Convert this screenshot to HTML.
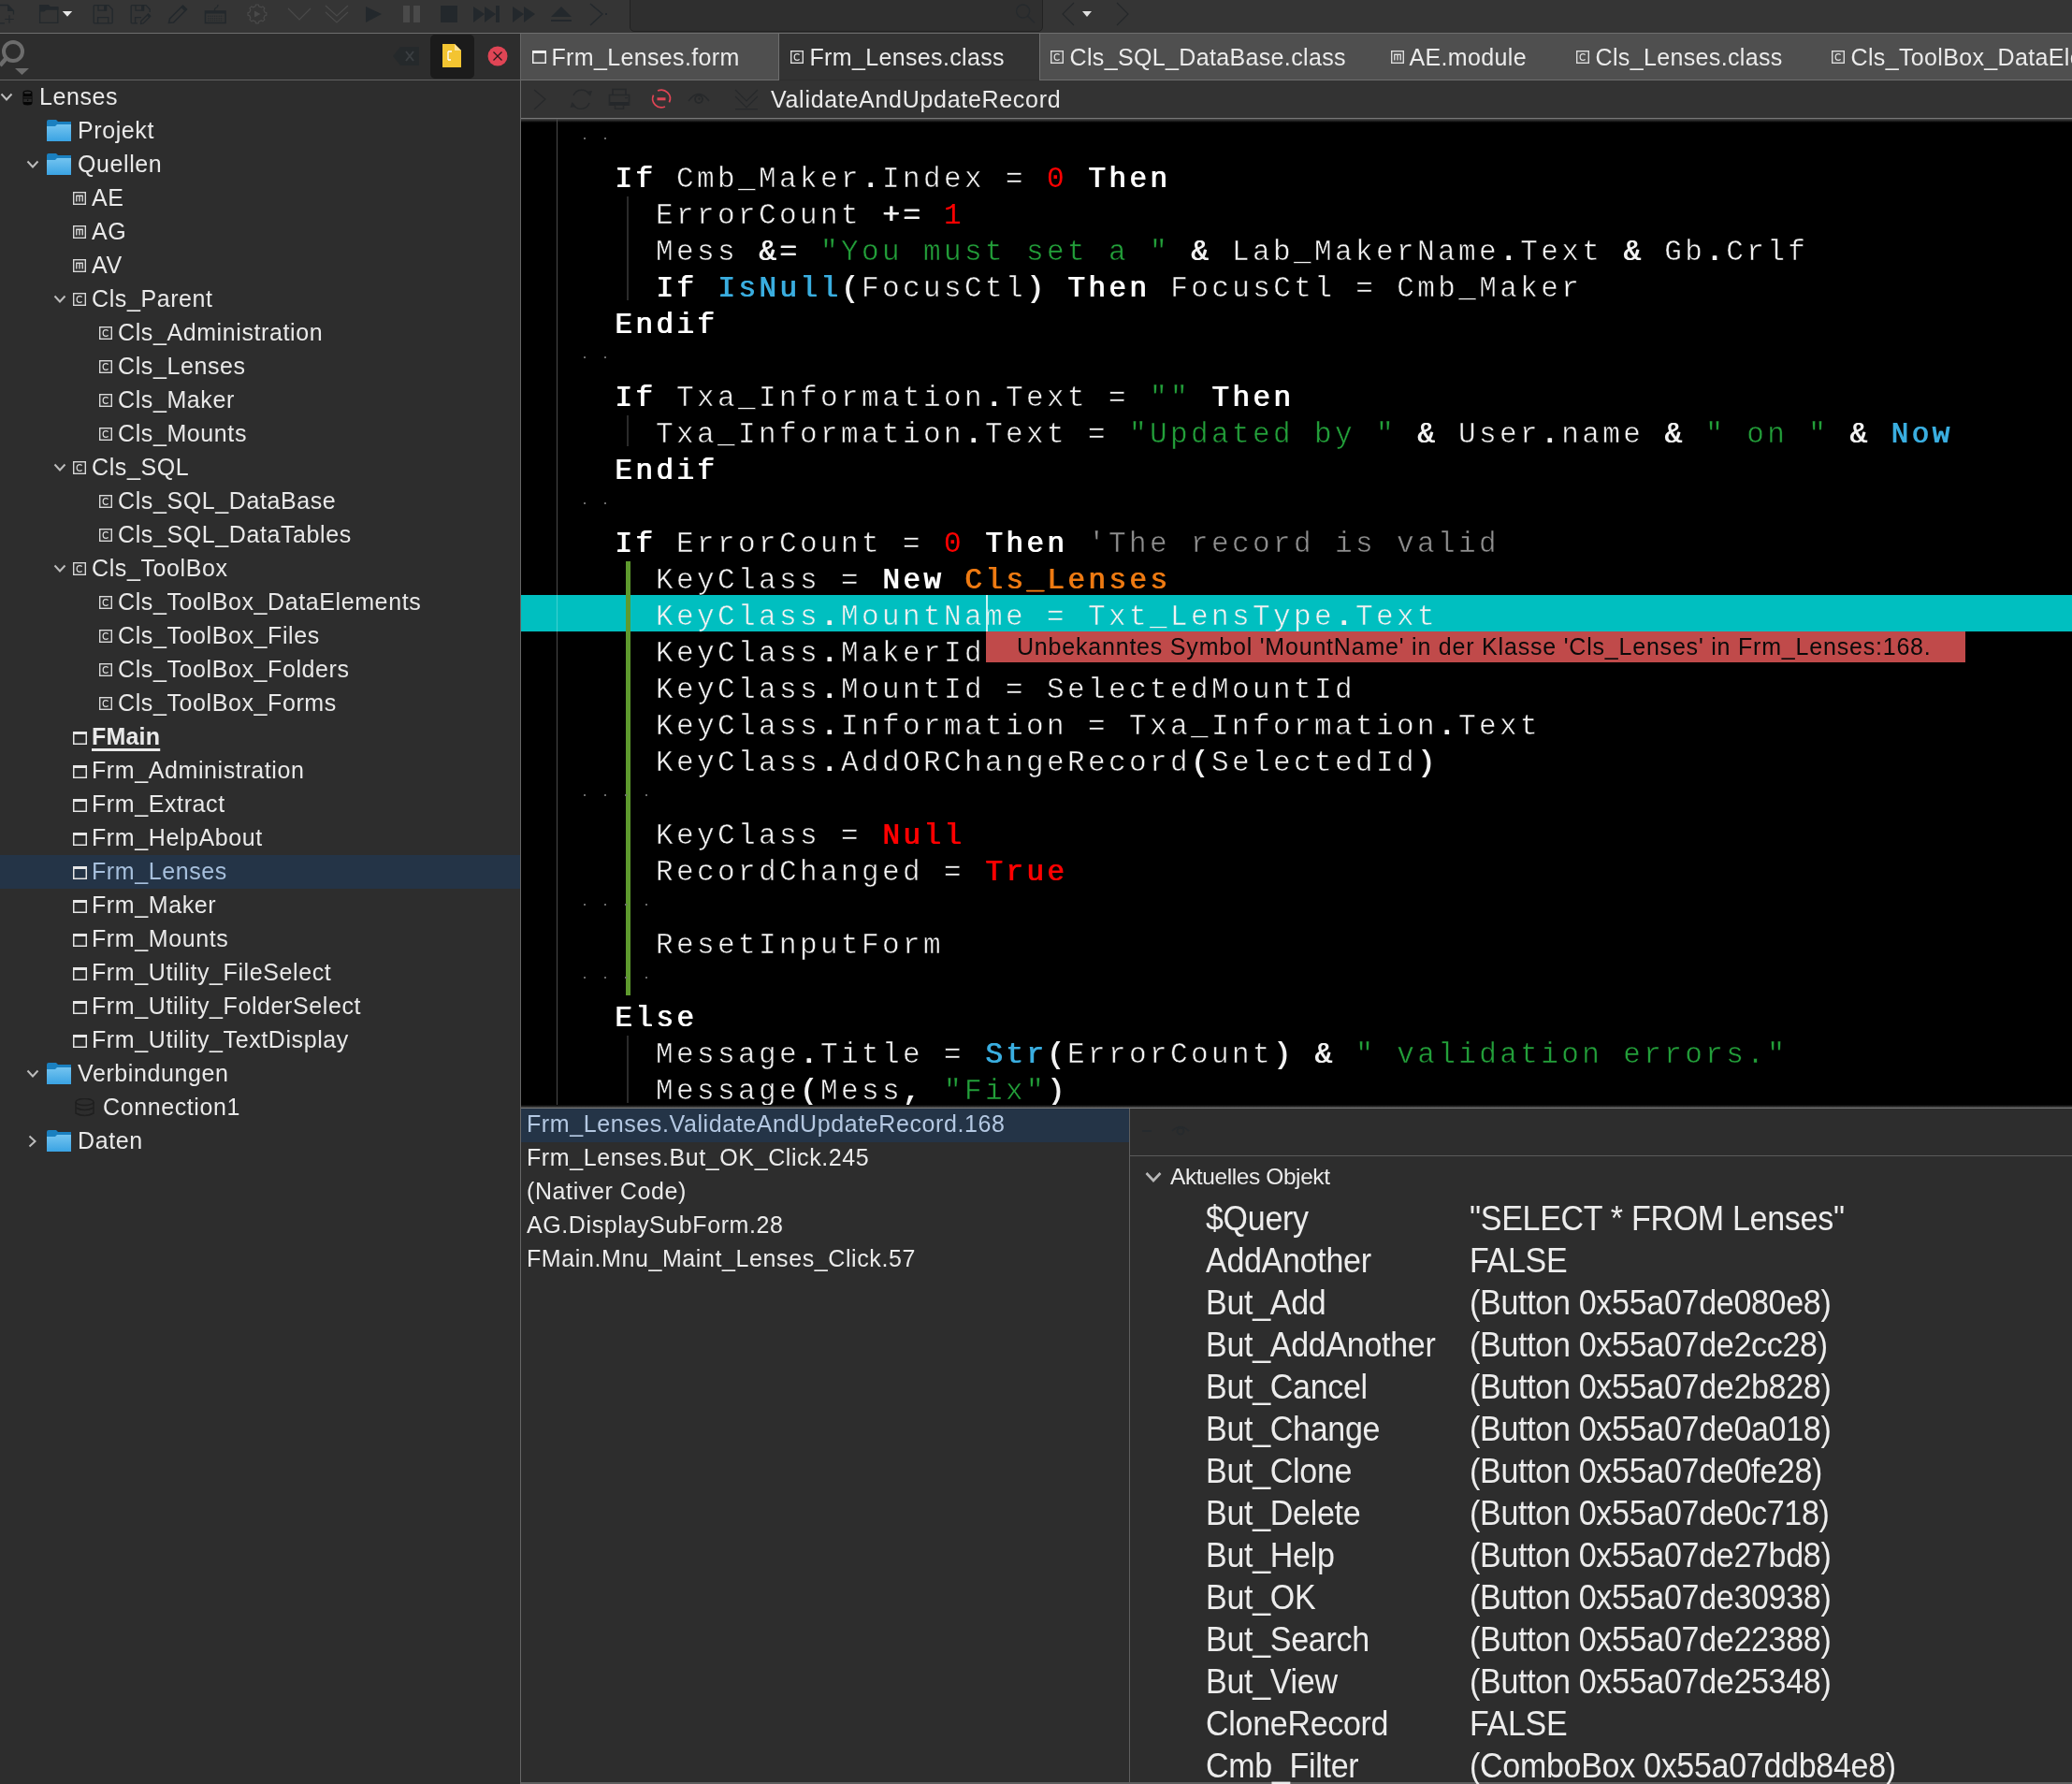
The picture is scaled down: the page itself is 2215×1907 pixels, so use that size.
<!DOCTYPE html>
<html><head><meta charset="utf-8"><style>
*{margin:0;padding:0;box-sizing:border-box}
html,body{width:2215px;height:1907px;overflow:hidden;background:#2d2d2d;font-family:"Liberation Sans",sans-serif}
#root{position:absolute;left:0;top:0;width:2215px;height:1907px;will-change:transform}
.ab{position:absolute;display:block}
.cl{position:absolute;height:39px;line-height:39px;font-family:"Liberation Mono",monospace;font-size:31px;letter-spacing:3.397px;white-space:pre;color:#f2f2f2;-webkit-text-stroke:0.5px #000}
.cl.hl{-webkit-text-stroke:0.5px #00bfc0}
.cl .tk,.cl .to,.cl .tx,.cl .tf,.cl .tc,.cl .tn{-webkit-text-stroke:0}
.tk{color:#fff;text-shadow:1px 0 0 currentColor}
.to{text-shadow:1px 0 0 currentColor}
.tn{color:#ff0000}
.tx{color:#ff0000;text-shadow:1px 0 0 currentColor}
.ts{color:#23a03a}
.tf{color:#3aaee0;text-shadow:1px 0 0 currentColor}
.tc{color:#ee7a12;text-shadow:1px 0 0 currentColor}
.tm{color:#8e8e8e}
.dot{position:absolute;width:2px;height:2px;background:#6a6a6a}
.tr{position:absolute;height:36px;line-height:36px;font-size:25px;letter-spacing:0.6px;color:#e9e9e9;white-space:pre}
.tr.sel{color:#a6bfdc}
.tr.main{font-weight:bold;text-decoration:underline;text-decoration-thickness:3px;text-underline-offset:4px;letter-spacing:0.2px}
.ui{position:absolute;font-size:25px;letter-spacing:0.6px;color:#ebebeb;white-space:pre}
.var{position:absolute;height:45px;line-height:45px;font-size:36px;letter-spacing:-0.3px;color:#ececec;white-space:pre;transform:scaleX(0.944);transform-origin:0 0}
</style></head><body><div id="root">
<div class="ab" style="left:0;top:0;width:2215px;height:35px;background:#353535"></div>
<div class="ab" style="left:0;top:35px;width:2215px;height:1px;background:#6e6e6e"></div>
<svg class="ab" style="left:0;top:0" width="1260" height="35"><path d="M-3 5.5 H8.5 L14.5 11.5 V15.5 M5 24.8 H-3" fill="none" stroke="#23282c" stroke-width="1.3"/><path d="M8 5 L15 12 H8 Z" fill="#23282c"/><path d="M5.3 20.5 H14.8 M10 16.3 V24.8" stroke="#23282c" stroke-width="1.2"/><path d="M42.6 24.4 V5.6 H51.4 L53.4 7.8 H61.8 V24.4 Z" fill="none" stroke="#23282c" stroke-width="1.3" stroke-linejoin="round"/><path d="M42 5 H51.6 L53.6 7.2 H62.4 V10.7 H49.5 L47 12.6 H42 Z" fill="#23282c"/><path d="M66.8 12 H77.2 L72 17.8 Z" fill="#e8e8e8"/><path d="M100.2 6.5 Q100.2 5.6 101 5.6 H116 L120.2 10 V24 Q120.2 24.8 119.4 24.8 H101 Q100.2 24.8 100.2 24 Z" fill="none" stroke="#23282c" stroke-width="1.3"/><path d="M105 5.6 V11.2 H113.6 V5.6" fill="none" stroke="#23282c" stroke-width="1.3"/><rect x="111" y="5.6" width="2.6" height="5.6" fill="#23282c"/><path d="M104.6 24.8 V18.6 H115.8 V24.8" fill="none" stroke="#23282c" stroke-width="1.3"/><path d="M147 24.8 H141 Q140.2 24.8 140.2 24 V6.5 Q140.2 5.6 141 5.6 H156 L160.2 10 V13" fill="none" stroke="#23282c" stroke-width="1.3"/><path d="M145 5.6 V11.2 H153.6 V5.6" fill="none" stroke="#23282c" stroke-width="1.3"/><rect x="151" y="5.6" width="2.6" height="5.6" fill="#23282c"/><path d="M144.6 24.8 V18.6 H151" fill="none" stroke="#23282c" stroke-width="1.3"/><path d="M150.5 25.5 L150.8 22.5 L158.5 15 L160.8 17.3 L153.2 25 Z" fill="none" stroke="#23282c" stroke-width="1.3"/><path d="M157 16.5 L158.5 15 L160.8 17.3 L159.3 18.8 Z" fill="#23282c"/><path d="M180.5 24.5 L181.5 20 L195.5 6 L199.5 10 L185.5 24 Z" fill="none" stroke="#23282c" stroke-width="1.5"/><path d="M193.5 8 L195.5 6 L199.5 10 L197.5 12 Z" fill="#23282c"/><rect x="219.5" y="12" width="21.5" height="12.5" fill="none" stroke="#23282c" stroke-width="1.6"/><rect x="219.5" y="12" width="21.5" height="2.5" fill="#23282c"/><path d="M222 17.2 H238.5 M222 19.7 H238.5 M222 22 H238.5" stroke="#23282c" stroke-width="1.1" stroke-dasharray="1.3 1" fill="none"/><path d="M229.5 12 V10 Q229.5 8.5 231.5 8 Q233 7.5 233 5" stroke="#23282c" stroke-width="1.2" fill="none"/><path d="M282.97 12.96 L284.81 13.57 L284.81 16.23 L282.97 16.84 L281.98 19.24 L282.85 20.97 L280.97 22.85 L279.24 21.98 L276.84 22.97 L276.23 24.81 L273.57 24.81 L272.96 22.97 L270.56 21.98 L268.83 22.85 L266.95 20.97 L267.82 19.24 L266.83 16.84 L264.99 16.23 L264.99 13.57 L266.83 12.96 L267.82 10.56 L266.95 8.83 L268.83 6.95 L270.56 7.82 L272.96 6.83 L273.57 4.99 L276.23 4.99 L276.84 6.83 L279.24 7.82 L280.97 6.95 L282.85 8.83 L281.98 10.56 Z" fill="none" stroke="#4a4a4a" stroke-width="1.2"/><path d="M272 11.5 L278.5 15 L272 18.5 Z" fill="#4a4a4a"/><path d="M308 9 L320 21 L332 9" fill="none" stroke="#4a4a4a" stroke-width="1.2"/><path d="M348 6 L360 17 L372 6 M348 13 L360 24 L372 13" fill="none" stroke="#4a4a4a" stroke-width="1.2"/><path d="M391 7 L408 15 L391 24 Z" fill="#23282c"/><rect x="431" y="6" width="7" height="18" fill="#4a4a4a"/><rect x="442" y="6" width="7" height="18" fill="#4a4a4a"/><rect x="471" y="6" width="18" height="18" fill="#23282c"/><path d="M506 7 L518 15 L506 24 Z M518 7 L530 15 L518 24 Z" fill="#23282c"/><rect x="530" y="6" width="4" height="18" fill="#23282c"/><path d="M548 7 L560 15 L548 24 Z M560 7 L572 15 L560 24 Z" fill="#23282c"/><path d="M589 18 L600 7 L611 18 Z" fill="#23282c"/><rect x="589" y="21" width="22" height="2" fill="#23282c"/><path d="M631 4 L644 15 L631 27" fill="none" stroke="#23282c" stroke-width="1.4"/><rect x="647" y="14" width="2" height="2" fill="#23282c"/><path d="M1148 3 L1136 15 L1148 27" fill="none" stroke="#24272a" stroke-width="1.1"/><path d="M1157 12 H1167 L1162 18 Z" fill="#e0e0e0"/><path d="M1194 3 L1206 15 L1194 27" fill="none" stroke="#24272a" stroke-width="1.1"/></svg>
<div class="ab" style="left:673px;top:-6px;width:442px;height:40px;background:#2f2f2f;border:1px solid #222;border-radius:5px"></div>
<svg class="ab" style="left:1085px;top:2px" width="24" height="26"><circle cx="8.6" cy="10" r="7" fill="none" stroke="#262a2d" stroke-width="1.3"/><path d="M13.5 15 L21 22.5" stroke="#262a2d" stroke-width="1.3"/></svg>
<svg class="ab" style="left:0;top:40px" width="36" height="44"><circle cx="14" cy="15" r="10" fill="none" stroke="#6c6c6c" stroke-width="4"/><path d="M7 22 L0 30" stroke="#6c6c6c" stroke-width="4.5"/><path d="M16 33 H31 L23.5 40 Z" fill="#6c6c6c"/></svg>
<svg class="ab" style="left:420px;top:50px" width="29" height="20"><path d="M0 10 L8 0 H28 V20 H8 Z" fill="#25292b"/><path d="M14 5 L22 15 M22 5 L14 15" stroke="#3b3f42" stroke-width="2"/></svg>
<div class="ab" style="left:460px;top:37px;width:47px;height:47px;background:#1b1b1b;border-radius:5px"></div>
<svg class="ab" style="left:473px;top:47px" width="21" height="26"><path d="M0 0 H13 L20 7 V25 H0 Z" fill="#f3c431"/><path d="M13 0 V7 H20 Z" fill="#fbe39a"/><path d="M6 8 H10 M6 8 V17 M6 17 H9" stroke="#fff" stroke-width="1.3" fill="none"/></svg>
<svg class="ab" style="left:521px;top:49px" width="22" height="22"><circle cx="11" cy="11" r="10.5" fill="#e04555"/><path d="M6.5 6.5 L15.5 15.5 M15.5 6.5 L6.5 15.5" stroke="#2a1a1c" stroke-width="1.3"/></svg>
<div class="ab" style="left:0;top:85px;width:556px;height:1px;background:#626262"></div>
<svg class="ab" style="left:0px;top:99px" width="14" height="10"><path d="M1.5 1.5 L7 7.5 L12.5 1.5" fill="none" stroke="#bdbdbd" stroke-width="2"/></svg>
<svg class="ab" style="left:24px;top:96px" width="11" height="17"><path d="M0.5 3 Q0.5 0.5 5.5 0.5 Q10.5 0.5 10.5 3 V14 Q10.5 16.5 5.5 16.5 Q0.5 16.5 0.5 14 Z" fill="#050505"/><ellipse cx="5.5" cy="3" rx="3.8" ry="1.3" fill="#2f2f2f"/><rect x="1.2" y="7.2" width="8.6" height="1.3" fill="#2a2a2a"/><rect x="1.2" y="9.5" width="8.6" height="3.5" fill="#2a2a2a"/><rect x="5" y="10.5" width="1.3" height="1.3" fill="#050505"/></svg>
<div class="tr" style="left:42px;top:85px">Lenses</div>
<svg class="ab" style="left:50px;top:128px" width="27" height="24"><defs><linearGradient id="fg" x1="0" y1="0" x2="0" y2="1"><stop offset="0" stop-color="#74c4f0"/><stop offset="1" stop-color="#3aa3e3"/></linearGradient></defs><path d="M0 2 Q0 0 2 0 H10 L12 2 H26 V8 H0 Z" fill="#1a80c0"/><path d="M0 7 H9 L11 5 H26 V23 H0 Z" fill="url(#fg)"/></svg>
<div class="tr" style="left:83px;top:121px">Projekt</div>
<svg class="ab" style="left:28px;top:171px" width="14" height="10"><path d="M1.5 1.5 L7 7.5 L12.5 1.5" fill="none" stroke="#bdbdbd" stroke-width="2"/></svg>
<svg class="ab" style="left:50px;top:164px" width="27" height="24"><defs><linearGradient id="fg" x1="0" y1="0" x2="0" y2="1"><stop offset="0" stop-color="#74c4f0"/><stop offset="1" stop-color="#3aa3e3"/></linearGradient></defs><path d="M0 2 Q0 0 2 0 H10 L12 2 H26 V8 H0 Z" fill="#1a80c0"/><path d="M0 7 H9 L11 5 H26 V23 H0 Z" fill="url(#fg)"/></svg>
<div class="tr" style="left:83px;top:157px">Quellen</div>
<svg class="ab" style="left:78px;top:205px" width="14" height="14"><rect x="0.7" y="0.7" width="12.6" height="12.6" fill="none" stroke="#d8d8d8" stroke-width="1.4"/><path d="M3.8 10.6 V4.2 H10.2 V10.6 M7 4.2 V10.6" fill="none" stroke="#d8d8d8" stroke-width="1.4"/></svg>
<div class="tr" style="left:98px;top:193px">AE</div>
<svg class="ab" style="left:78px;top:241px" width="14" height="14"><rect x="0.7" y="0.7" width="12.6" height="12.6" fill="none" stroke="#d8d8d8" stroke-width="1.4"/><path d="M3.8 10.6 V4.2 H10.2 V10.6 M7 4.2 V10.6" fill="none" stroke="#d8d8d8" stroke-width="1.4"/></svg>
<div class="tr" style="left:98px;top:229px">AG</div>
<svg class="ab" style="left:78px;top:277px" width="14" height="14"><rect x="0.7" y="0.7" width="12.6" height="12.6" fill="none" stroke="#d8d8d8" stroke-width="1.4"/><path d="M3.8 10.6 V4.2 H10.2 V10.6 M7 4.2 V10.6" fill="none" stroke="#d8d8d8" stroke-width="1.4"/></svg>
<div class="tr" style="left:98px;top:265px">AV</div>
<svg class="ab" style="left:57px;top:315px" width="14" height="10"><path d="M1.5 1.5 L7 7.5 L12.5 1.5" fill="none" stroke="#bdbdbd" stroke-width="2"/></svg>
<svg class="ab" style="left:78px;top:313px" width="14" height="14"><rect x="0.7" y="0.7" width="12.6" height="12.6" fill="none" stroke="#d8d8d8" stroke-width="1.4"/><path d="M9.6 4.6 Q8.8 3.6 7.2 3.6 Q4.2 3.6 4.2 7 Q4.2 10.4 7.2 10.4 Q8.8 10.4 9.6 9.4" fill="none" stroke="#d8d8d8" stroke-width="1.3"/></svg>
<div class="tr" style="left:98px;top:301px">Cls_Parent</div>
<svg class="ab" style="left:106px;top:349px" width="14" height="14"><rect x="0.7" y="0.7" width="12.6" height="12.6" fill="none" stroke="#d8d8d8" stroke-width="1.4"/><path d="M9.6 4.6 Q8.8 3.6 7.2 3.6 Q4.2 3.6 4.2 7 Q4.2 10.4 7.2 10.4 Q8.8 10.4 9.6 9.4" fill="none" stroke="#d8d8d8" stroke-width="1.3"/></svg>
<div class="tr" style="left:126px;top:337px">Cls_Administration</div>
<svg class="ab" style="left:106px;top:385px" width="14" height="14"><rect x="0.7" y="0.7" width="12.6" height="12.6" fill="none" stroke="#d8d8d8" stroke-width="1.4"/><path d="M9.6 4.6 Q8.8 3.6 7.2 3.6 Q4.2 3.6 4.2 7 Q4.2 10.4 7.2 10.4 Q8.8 10.4 9.6 9.4" fill="none" stroke="#d8d8d8" stroke-width="1.3"/></svg>
<div class="tr" style="left:126px;top:373px">Cls_Lenses</div>
<svg class="ab" style="left:106px;top:421px" width="14" height="14"><rect x="0.7" y="0.7" width="12.6" height="12.6" fill="none" stroke="#d8d8d8" stroke-width="1.4"/><path d="M9.6 4.6 Q8.8 3.6 7.2 3.6 Q4.2 3.6 4.2 7 Q4.2 10.4 7.2 10.4 Q8.8 10.4 9.6 9.4" fill="none" stroke="#d8d8d8" stroke-width="1.3"/></svg>
<div class="tr" style="left:126px;top:409px">Cls_Maker</div>
<svg class="ab" style="left:106px;top:457px" width="14" height="14"><rect x="0.7" y="0.7" width="12.6" height="12.6" fill="none" stroke="#d8d8d8" stroke-width="1.4"/><path d="M9.6 4.6 Q8.8 3.6 7.2 3.6 Q4.2 3.6 4.2 7 Q4.2 10.4 7.2 10.4 Q8.8 10.4 9.6 9.4" fill="none" stroke="#d8d8d8" stroke-width="1.3"/></svg>
<div class="tr" style="left:126px;top:445px">Cls_Mounts</div>
<svg class="ab" style="left:57px;top:495px" width="14" height="10"><path d="M1.5 1.5 L7 7.5 L12.5 1.5" fill="none" stroke="#bdbdbd" stroke-width="2"/></svg>
<svg class="ab" style="left:78px;top:493px" width="14" height="14"><rect x="0.7" y="0.7" width="12.6" height="12.6" fill="none" stroke="#d8d8d8" stroke-width="1.4"/><path d="M9.6 4.6 Q8.8 3.6 7.2 3.6 Q4.2 3.6 4.2 7 Q4.2 10.4 7.2 10.4 Q8.8 10.4 9.6 9.4" fill="none" stroke="#d8d8d8" stroke-width="1.3"/></svg>
<div class="tr" style="left:98px;top:481px">Cls_SQL</div>
<svg class="ab" style="left:106px;top:529px" width="14" height="14"><rect x="0.7" y="0.7" width="12.6" height="12.6" fill="none" stroke="#d8d8d8" stroke-width="1.4"/><path d="M9.6 4.6 Q8.8 3.6 7.2 3.6 Q4.2 3.6 4.2 7 Q4.2 10.4 7.2 10.4 Q8.8 10.4 9.6 9.4" fill="none" stroke="#d8d8d8" stroke-width="1.3"/></svg>
<div class="tr" style="left:126px;top:517px">Cls_SQL_DataBase</div>
<svg class="ab" style="left:106px;top:565px" width="14" height="14"><rect x="0.7" y="0.7" width="12.6" height="12.6" fill="none" stroke="#d8d8d8" stroke-width="1.4"/><path d="M9.6 4.6 Q8.8 3.6 7.2 3.6 Q4.2 3.6 4.2 7 Q4.2 10.4 7.2 10.4 Q8.8 10.4 9.6 9.4" fill="none" stroke="#d8d8d8" stroke-width="1.3"/></svg>
<div class="tr" style="left:126px;top:553px">Cls_SQL_DataTables</div>
<svg class="ab" style="left:57px;top:603px" width="14" height="10"><path d="M1.5 1.5 L7 7.5 L12.5 1.5" fill="none" stroke="#bdbdbd" stroke-width="2"/></svg>
<svg class="ab" style="left:78px;top:601px" width="14" height="14"><rect x="0.7" y="0.7" width="12.6" height="12.6" fill="none" stroke="#d8d8d8" stroke-width="1.4"/><path d="M9.6 4.6 Q8.8 3.6 7.2 3.6 Q4.2 3.6 4.2 7 Q4.2 10.4 7.2 10.4 Q8.8 10.4 9.6 9.4" fill="none" stroke="#d8d8d8" stroke-width="1.3"/></svg>
<div class="tr" style="left:98px;top:589px">Cls_ToolBox</div>
<svg class="ab" style="left:106px;top:637px" width="14" height="14"><rect x="0.7" y="0.7" width="12.6" height="12.6" fill="none" stroke="#d8d8d8" stroke-width="1.4"/><path d="M9.6 4.6 Q8.8 3.6 7.2 3.6 Q4.2 3.6 4.2 7 Q4.2 10.4 7.2 10.4 Q8.8 10.4 9.6 9.4" fill="none" stroke="#d8d8d8" stroke-width="1.3"/></svg>
<div class="tr" style="left:126px;top:625px">Cls_ToolBox_DataElements</div>
<svg class="ab" style="left:106px;top:673px" width="14" height="14"><rect x="0.7" y="0.7" width="12.6" height="12.6" fill="none" stroke="#d8d8d8" stroke-width="1.4"/><path d="M9.6 4.6 Q8.8 3.6 7.2 3.6 Q4.2 3.6 4.2 7 Q4.2 10.4 7.2 10.4 Q8.8 10.4 9.6 9.4" fill="none" stroke="#d8d8d8" stroke-width="1.3"/></svg>
<div class="tr" style="left:126px;top:661px">Cls_ToolBox_Files</div>
<svg class="ab" style="left:106px;top:709px" width="14" height="14"><rect x="0.7" y="0.7" width="12.6" height="12.6" fill="none" stroke="#d8d8d8" stroke-width="1.4"/><path d="M9.6 4.6 Q8.8 3.6 7.2 3.6 Q4.2 3.6 4.2 7 Q4.2 10.4 7.2 10.4 Q8.8 10.4 9.6 9.4" fill="none" stroke="#d8d8d8" stroke-width="1.3"/></svg>
<div class="tr" style="left:126px;top:697px">Cls_ToolBox_Folders</div>
<svg class="ab" style="left:106px;top:745px" width="14" height="14"><rect x="0.7" y="0.7" width="12.6" height="12.6" fill="none" stroke="#d8d8d8" stroke-width="1.4"/><path d="M9.6 4.6 Q8.8 3.6 7.2 3.6 Q4.2 3.6 4.2 7 Q4.2 10.4 7.2 10.4 Q8.8 10.4 9.6 9.4" fill="none" stroke="#d8d8d8" stroke-width="1.3"/></svg>
<div class="tr" style="left:126px;top:733px">Cls_ToolBox_Forms</div>
<svg class="ab" style="left:78px;top:782px" width="15" height="14"><rect x="0.75" y="0.75" width="13.5" height="12.5" fill="none" stroke="#e6e6e6" stroke-width="1.5"/><rect x="0" y="0" width="15" height="3" fill="#e6e6e6"/></svg>
<div class="tr main" style="left:98px;top:769px">FMain</div>
<svg class="ab" style="left:78px;top:818px" width="15" height="14"><rect x="0.75" y="0.75" width="13.5" height="12.5" fill="none" stroke="#e6e6e6" stroke-width="1.5"/><rect x="0" y="0" width="15" height="3" fill="#e6e6e6"/></svg>
<div class="tr" style="left:98px;top:805px">Frm_Administration</div>
<svg class="ab" style="left:78px;top:854px" width="15" height="14"><rect x="0.75" y="0.75" width="13.5" height="12.5" fill="none" stroke="#e6e6e6" stroke-width="1.5"/><rect x="0" y="0" width="15" height="3" fill="#e6e6e6"/></svg>
<div class="tr" style="left:98px;top:841px">Frm_Extract</div>
<svg class="ab" style="left:78px;top:890px" width="15" height="14"><rect x="0.75" y="0.75" width="13.5" height="12.5" fill="none" stroke="#e6e6e6" stroke-width="1.5"/><rect x="0" y="0" width="15" height="3" fill="#e6e6e6"/></svg>
<div class="tr" style="left:98px;top:877px">Frm_HelpAbout</div>
<div class="ab" style="left:0;top:914px;width:556px;height:36px;background:#243447"></div>
<svg class="ab" style="left:78px;top:926px" width="15" height="14"><rect x="0.75" y="0.75" width="13.5" height="12.5" fill="none" stroke="#e6e6e6" stroke-width="1.5"/><rect x="0" y="0" width="15" height="3" fill="#e6e6e6"/></svg>
<div class="tr sel" style="left:98px;top:913px">Frm_Lenses</div>
<svg class="ab" style="left:78px;top:962px" width="15" height="14"><rect x="0.75" y="0.75" width="13.5" height="12.5" fill="none" stroke="#e6e6e6" stroke-width="1.5"/><rect x="0" y="0" width="15" height="3" fill="#e6e6e6"/></svg>
<div class="tr" style="left:98px;top:949px">Frm_Maker</div>
<svg class="ab" style="left:78px;top:998px" width="15" height="14"><rect x="0.75" y="0.75" width="13.5" height="12.5" fill="none" stroke="#e6e6e6" stroke-width="1.5"/><rect x="0" y="0" width="15" height="3" fill="#e6e6e6"/></svg>
<div class="tr" style="left:98px;top:985px">Frm_Mounts</div>
<svg class="ab" style="left:78px;top:1034px" width="15" height="14"><rect x="0.75" y="0.75" width="13.5" height="12.5" fill="none" stroke="#e6e6e6" stroke-width="1.5"/><rect x="0" y="0" width="15" height="3" fill="#e6e6e6"/></svg>
<div class="tr" style="left:98px;top:1021px">Frm_Utility_FileSelect</div>
<svg class="ab" style="left:78px;top:1070px" width="15" height="14"><rect x="0.75" y="0.75" width="13.5" height="12.5" fill="none" stroke="#e6e6e6" stroke-width="1.5"/><rect x="0" y="0" width="15" height="3" fill="#e6e6e6"/></svg>
<div class="tr" style="left:98px;top:1057px">Frm_Utility_FolderSelect</div>
<svg class="ab" style="left:78px;top:1106px" width="15" height="14"><rect x="0.75" y="0.75" width="13.5" height="12.5" fill="none" stroke="#e6e6e6" stroke-width="1.5"/><rect x="0" y="0" width="15" height="3" fill="#e6e6e6"/></svg>
<div class="tr" style="left:98px;top:1093px">Frm_Utility_TextDisplay</div>
<svg class="ab" style="left:28px;top:1143px" width="14" height="10"><path d="M1.5 1.5 L7 7.5 L12.5 1.5" fill="none" stroke="#bdbdbd" stroke-width="2"/></svg>
<svg class="ab" style="left:50px;top:1136px" width="27" height="24"><defs><linearGradient id="fg" x1="0" y1="0" x2="0" y2="1"><stop offset="0" stop-color="#74c4f0"/><stop offset="1" stop-color="#3aa3e3"/></linearGradient></defs><path d="M0 2 Q0 0 2 0 H10 L12 2 H26 V8 H0 Z" fill="#1a80c0"/><path d="M0 7 H9 L11 5 H26 V23 H0 Z" fill="url(#fg)"/></svg>
<div class="tr" style="left:83px;top:1129px">Verbindungen</div>
<svg class="ab" style="left:80px;top:1174px" width="21" height="20"><ellipse cx="10.5" cy="4" rx="9.5" ry="3.5" fill="none" stroke="#1f1f1f" stroke-width="1.5"/><path d="M1 4 V16 Q10.5 21 20 16 V4 M1 10 Q10.5 15 20 10" fill="none" stroke="#1f1f1f" stroke-width="1.5"/></svg>
<div class="tr" style="left:110px;top:1165px">Connection1</div>
<svg class="ab" style="left:30px;top:1213px" width="10" height="14"><path d="M1.5 1.5 L7.5 7 L1.5 12.5" fill="none" stroke="#bdbdbd" stroke-width="2"/></svg>
<svg class="ab" style="left:50px;top:1208px" width="27" height="24"><defs><linearGradient id="fg" x1="0" y1="0" x2="0" y2="1"><stop offset="0" stop-color="#74c4f0"/><stop offset="1" stop-color="#3aa3e3"/></linearGradient></defs><path d="M0 2 Q0 0 2 0 H10 L12 2 H26 V8 H0 Z" fill="#1a80c0"/><path d="M0 7 H9 L11 5 H26 V23 H0 Z" fill="url(#fg)"/></svg>
<div class="tr" style="left:83px;top:1201px">Daten</div>
<div class="ab" style="left:556px;top:36px;width:1px;height:1871px;background:#666"></div>
<div class="ab" style="left:557px;top:36px;width:276px;height:49px;background:#4f4f4f"></div>
<svg class="ab" style="left:569px;top:54px" width="15" height="14"><rect x="0.75" y="0.75" width="13.5" height="12.5" fill="none" stroke="#ececec" stroke-width="1.5"/><rect x="0" y="0" width="15" height="3" fill="#ececec"/></svg>
<div class="ui" style="left:589.5px;top:43px;line-height:36px;letter-spacing:0.35px">Frm_Lenses.form</div>
<div class="ab" style="left:833px;top:36px;width:278px;height:49px;background:#333333"></div>
<svg class="ab" style="left:845px;top:54px" width="14" height="14"><rect x="0.7" y="0.7" width="12.6" height="12.6" fill="none" stroke="#dcdcdc" stroke-width="1.4"/><path d="M9.6 4.6 Q8.8 3.6 7.2 3.6 Q4.2 3.6 4.2 7 Q4.2 10.4 7.2 10.4 Q8.8 10.4 9.6 9.4" fill="none" stroke="#dcdcdc" stroke-width="1.3"/></svg>
<div class="ui" style="left:865.5px;top:43px;line-height:36px;letter-spacing:0.35px">Frm_Lenses.class</div>
<div class="ab" style="left:1111px;top:36px;width:363px;height:49px;background:#4f4f4f"></div>
<svg class="ab" style="left:1123px;top:54px" width="14" height="14"><rect x="0.7" y="0.7" width="12.6" height="12.6" fill="none" stroke="#dcdcdc" stroke-width="1.4"/><path d="M9.6 4.6 Q8.8 3.6 7.2 3.6 Q4.2 3.6 4.2 7 Q4.2 10.4 7.2 10.4 Q8.8 10.4 9.6 9.4" fill="none" stroke="#dcdcdc" stroke-width="1.3"/></svg>
<div class="ui" style="left:1143.5px;top:43px;line-height:36px;letter-spacing:0.35px">Cls_SQL_DataBase.class</div>
<div class="ab" style="left:1474px;top:36px;width:199px;height:49px;background:#4f4f4f"></div>
<svg class="ab" style="left:1487px;top:54px" width="14" height="14"><rect x="0.7" y="0.7" width="12.6" height="12.6" fill="none" stroke="#dcdcdc" stroke-width="1.4"/><path d="M3.8 10.6 V4.2 H10.2 V10.6 M7 4.2 V10.6" fill="none" stroke="#dcdcdc" stroke-width="1.4"/></svg>
<div class="ui" style="left:1506.5px;top:43px;line-height:36px;letter-spacing:0.35px">AE.module</div>
<div class="ab" style="left:1673px;top:36px;width:273px;height:49px;background:#4f4f4f"></div>
<svg class="ab" style="left:1685px;top:54px" width="14" height="14"><rect x="0.7" y="0.7" width="12.6" height="12.6" fill="none" stroke="#dcdcdc" stroke-width="1.4"/><path d="M9.6 4.6 Q8.8 3.6 7.2 3.6 Q4.2 3.6 4.2 7 Q4.2 10.4 7.2 10.4 Q8.8 10.4 9.6 9.4" fill="none" stroke="#dcdcdc" stroke-width="1.3"/></svg>
<div class="ui" style="left:1705.5px;top:43px;line-height:36px;letter-spacing:0.35px">Cls_Lenses.class</div>
<div class="ab" style="left:1946px;top:36px;width:454px;height:49px;background:#4f4f4f"></div>
<svg class="ab" style="left:1958px;top:54px" width="14" height="14"><rect x="0.7" y="0.7" width="12.6" height="12.6" fill="none" stroke="#dcdcdc" stroke-width="1.4"/><path d="M9.6 4.6 Q8.8 3.6 7.2 3.6 Q4.2 3.6 4.2 7 Q4.2 10.4 7.2 10.4 Q8.8 10.4 9.6 9.4" fill="none" stroke="#dcdcdc" stroke-width="1.3"/></svg>
<div class="ui" style="left:1978.5px;top:43px;line-height:36px;letter-spacing:0.35px">Cls_ToolBox_DataElements.class</div>
<div class="ab" style="left:832px;top:36px;width:1px;height:50px;background:#6e6e6e"></div>
<div class="ab" style="left:1111px;top:36px;width:1px;height:50px;background:#6e6e6e"></div>
<div class="ab" style="left:557px;top:85px;width:276px;height:1px;background:#6e6e6e"></div>
<div class="ab" style="left:1111px;top:85px;width:1104px;height:1px;background:#6e6e6e"></div>
<div class="ab" style="left:557px;top:86px;width:1658px;height:40px;background:#333333"></div>
<svg class="ab" style="left:557px;top:86px" width="300" height="40"><path d="M14 10 L26 20 L14 31" fill="none" stroke="#27292b" stroke-width="1.3"/><path d="M56 16 A9.5 9.5 0 0 1 73 15" fill="none" stroke="#27292b" stroke-width="1.4"/><path d="M73 24 A9.5 9.5 0 0 1 55.5 25" fill="none" stroke="#27292b" stroke-width="1.4"/><path d="M70 12 L74 17 L76 11 Z M58.5 28 L54.5 23 L52.5 29 Z" fill="#27292b"/><path d="M98 15.5 V9.5 H112 V15.5" fill="none" stroke="#27292b" stroke-width="1.6"/><path d="M94.5 15.5 H115.5 V26.3 H94.5 Z" fill="none" stroke="#27292b" stroke-width="1.6"/><rect x="95" y="23" width="20" height="3.5" fill="#24272a"/><rect x="100.5" y="26.3" width="9" height="4" fill="none" stroke="#27292b" stroke-width="1.4"/><rect x="111" y="18" width="3" height="1.2" fill="#27292b"/><path d="M146.07 11.07 A9.3 9.3 0 0 1 158.43 23.43 M153.93 27.93 A9.3 9.3 0 0 1 141.57 15.57" fill="none" stroke="#e04555" stroke-width="1.7"/><rect x="145.5" y="18.3" width="9" height="3" fill="#e04555"/><path d="M179 22 Q190 7 201 22" fill="none" stroke="#27292b" stroke-width="1.5"/><circle cx="190" cy="20" r="4" fill="none" stroke="#27292b" stroke-width="1.8"/><circle cx="190.5" cy="19.5" r="1.2" fill="#27292b"/><path d="M229 10 L241 22 L253 10 M229 17 L241 29 L253 17" fill="none" stroke="#27292b" stroke-width="1.2"/><rect x="229" y="30" width="24" height="1.3" fill="#27292b"/></svg>
<div class="ui" style="left:824px;top:88px;line-height:36px;letter-spacing:0.7px">ValidateAndUpdateRecord</div>
<div class="ab" style="left:557px;top:126px;width:1658px;height:1px;background:#777"></div>
<div class="ab" style="left:557px;top:127px;width:1658px;height:1055px;background:#000"></div>
<div class="ab" style="left:557px;top:127px;width:1658px;height:4px;background:linear-gradient(#4a4a4a,#000)"></div>
<div class="ab" style="left:595px;top:127px;width:1px;height:1055px;background:#4a4a4a"></div>
<div class="ab" style="left:670px;top:210px;width:2px;height:111px;background:#2a2a2a"></div>
<div class="ab" style="left:670px;top:444px;width:2px;height:33px;background:#2a2a2a"></div>
<div class="ab" style="left:670px;top:1107px;width:2px;height:72px;background:#2a2a2a"></div>
<div class="ab" style="left:557px;top:636px;width:1658px;height:39px;background:#00bfc0"></div>
<div class="ab" style="left:595px;top:636px;width:1px;height:39px;background:#40d0d0"></div>
<div class="ab" style="left:669px;top:600px;width:5px;height:464px;background:#5e9a2e"></div>
<div class="cl" style="top:172px;left:657.0px"><span class="tk">If</span><span class="tw"> Cmb_Maker</span><span class="to">.</span><span class="tw">Index = </span><span class="tn">0</span><span class="tw"> </span><span class="tk">Then</span></div>
<div class="cl" style="top:211px;left:701.0px"><span class="tw">ErrorCount </span><span class="to">+=</span><span class="tw"> </span><span class="tn">1</span></div>
<div class="cl" style="top:250px;left:701.0px"><span class="tw">Mess </span><span class="to">&amp;=</span><span class="tw"> </span><span class="ts">&quot;You must set a &quot;</span><span class="tw"> </span><span class="to">&amp;</span><span class="tw"> Lab_MakerName</span><span class="to">.</span><span class="tw">Text </span><span class="to">&amp;</span><span class="tw"> Gb</span><span class="to">.</span><span class="tw">Crlf</span></div>
<div class="cl" style="top:289px;left:701.0px"><span class="tk">If</span><span class="tw"> </span><span class="tf">IsNull</span><span class="to">(</span><span class="tw">FocusCtl</span><span class="to">)</span><span class="tw"> </span><span class="tk">Then</span><span class="tw"> FocusCtl = Cmb_Maker</span></div>
<div class="cl" style="top:328px;left:657.0px"><span class="tk">Endif</span></div>
<div class="cl" style="top:406px;left:657.0px"><span class="tk">If</span><span class="tw"> Txa_Information</span><span class="to">.</span><span class="tw">Text = </span><span class="ts">&quot;&quot;</span><span class="tw"> </span><span class="tk">Then</span></div>
<div class="cl" style="top:445px;left:701.0px"><span class="tw">Txa_Information</span><span class="to">.</span><span class="tw">Text = </span><span class="ts">&quot;Updated by &quot;</span><span class="tw"> </span><span class="to">&amp;</span><span class="tw"> User</span><span class="to">.</span><span class="tw">name </span><span class="to">&amp;</span><span class="tw"> </span><span class="ts">&quot; on &quot;</span><span class="tw"> </span><span class="to">&amp;</span><span class="tw"> </span><span class="tf">Now</span></div>
<div class="cl" style="top:484px;left:657.0px"><span class="tk">Endif</span></div>
<div class="cl" style="top:562px;left:657.0px"><span class="tk">If</span><span class="tw"> ErrorCount = </span><span class="tn">0</span><span class="tw"> </span><span class="tk">Then</span><span class="tw"> </span><span class="tm">&#x27;The record is valid</span></div>
<div class="cl" style="top:601px;left:701.0px"><span class="tw">KeyClass = </span><span class="tk">New</span><span class="tw"> </span><span class="tc">Cls_Lenses</span></div>
<div class="cl hl" style="top:640px;left:701.0px"><span class="tw">KeyClass</span><span class="to">.</span><span class="tw">MountName = Txt_LensType</span><span class="to">.</span><span class="tw">Text</span></div>
<div class="cl" style="top:679px;left:701.0px"><span class="tw">KeyClass</span><span class="to">.</span><span class="tw">MakerId = SelectedMakerId</span></div>
<div class="cl" style="top:718px;left:701.0px"><span class="tw">KeyClass</span><span class="to">.</span><span class="tw">MountId = SelectedMountId</span></div>
<div class="cl" style="top:757px;left:701.0px"><span class="tw">KeyClass</span><span class="to">.</span><span class="tw">Information = Txa_Information</span><span class="to">.</span><span class="tw">Text</span></div>
<div class="cl" style="top:796px;left:701.0px"><span class="tw">KeyClass</span><span class="to">.</span><span class="tw">AddORChangeRecord</span><span class="to">(</span><span class="tw">SelectedId</span><span class="to">)</span></div>
<div class="cl" style="top:874px;left:701.0px"><span class="tw">KeyClass = </span><span class="tx">Null</span></div>
<div class="cl" style="top:913px;left:701.0px"><span class="tw">RecordChanged = </span><span class="tx">True</span></div>
<div class="cl" style="top:991px;left:701.0px"><span class="tw">ResetInputForm</span></div>
<div class="cl" style="top:1069px;left:657.0px"><span class="tk">Else</span></div>
<div class="cl" style="top:1108px;left:701.0px"><span class="tw">Message</span><span class="to">.</span><span class="tw">Title = </span><span class="tf">Str</span><span class="to">(</span><span class="tw">ErrorCount</span><span class="to">)</span><span class="tw"> </span><span class="to">&amp;</span><span class="tw"> </span><span class="ts">&quot; validation errors.&quot;</span></div>
<div class="cl" style="top:1147px;left:701.0px"><span class="tw">Message</span><span class="to">(</span><span class="tw">Mess</span><span class="to">,</span><span class="tw"> </span><span class="ts">&quot;Fix&quot;</span><span class="to">)</span></div>
<div class="dot" style="top:147px;left:624.0px"></div>
<div class="dot" style="top:147px;left:646.0px"></div>
<div class="dot" style="top:381px;left:624.0px"></div>
<div class="dot" style="top:381px;left:646.0px"></div>
<div class="dot" style="top:537px;left:624.0px"></div>
<div class="dot" style="top:537px;left:646.0px"></div>
<div class="dot" style="top:849px;left:624.0px"></div>
<div class="dot" style="top:849px;left:646.0px"></div>
<div class="dot" style="top:849px;left:668.0px"></div>
<div class="dot" style="top:849px;left:690.0px"></div>
<div class="dot" style="top:966px;left:624.0px"></div>
<div class="dot" style="top:966px;left:646.0px"></div>
<div class="dot" style="top:966px;left:668.0px"></div>
<div class="dot" style="top:966px;left:690.0px"></div>
<div class="dot" style="top:1044px;left:624.0px"></div>
<div class="dot" style="top:1044px;left:646.0px"></div>
<div class="dot" style="top:1044px;left:668.0px"></div>
<div class="dot" style="top:1044px;left:690.0px"></div>
<div class="ab" style="left:1054px;top:636px;width:2px;height:39px;background:#c8f4f4"></div>
<div class="ab" style="left:1054px;top:675px;width:1047px;height:33px;background:#c04a4a"></div>
<div class="ui" style="left:1087px;top:675px;line-height:33px;color:#0a0a0a;letter-spacing:0.8px">Unbekanntes Symbol 'MountName' in der Klasse 'Cls_Lenses' in Frm_Lenses:168.</div>
<div class="ab" style="left:557px;top:1181px;width:1658px;height:3px;background:linear-gradient(#000,#4a4a4a)"></div><div class="ab" style="left:557px;top:1184px;width:1658px;height:1px;background:#777"></div>
<div class="ab" style="left:557px;top:1185px;width:650px;height:720px;background:#2d2d2d"></div>
<div class="ab" style="left:557px;top:1185px;width:650px;height:36px;background:#243447"></div>
<div class="ui" style="left:563px;top:1183px;line-height:36px;color:#b4c8e2;letter-spacing:0.6px">Frm_Lenses.ValidateAndUpdateRecord.168</div>
<div class="ui" style="left:563px;top:1219px;line-height:36px;color:#ebebeb;letter-spacing:0.6px">Frm_Lenses.But_OK_Click.245</div>
<div class="ui" style="left:563px;top:1255px;line-height:36px;color:#ebebeb;letter-spacing:0.6px">(Nativer Code)</div>
<div class="ui" style="left:563px;top:1291px;line-height:36px;color:#ebebeb;letter-spacing:0.6px">AG.DisplaySubForm.28</div>
<div class="ui" style="left:563px;top:1327px;line-height:36px;color:#ebebeb;letter-spacing:0.6px">FMain.Mnu_Maint_Lenses_Click.57</div>
<div class="ab" style="left:1207px;top:1185px;width:1px;height:722px;background:#5e5e5e"></div>
<div class="ab" style="left:557px;top:1905px;width:1658px;height:2px;background:#5e5e5e"></div>
<svg class="ab" style="left:1215px;top:1195px" width="70" height="30"><rect x="6" y="13" width="10" height="2" fill="#262a2d"/><path d="M38 14 Q47 5 56 14" fill="none" stroke="#262a2d" stroke-width="1.5"/><circle cx="47" cy="14" r="3.5" fill="none" stroke="#262a2d" stroke-width="1.8"/></svg>
<div class="ab" style="left:1208px;top:1235px;width:1007px;height:1px;background:#5a5a5a"></div>
<svg class="ab" style="left:1224px;top:1252px" width="18" height="13"><path d="M1.5 2 L9 10 L16.5 2" fill="none" stroke="#b8b8b8" stroke-width="2.6"/></svg>
<div class="ui" style="left:1251px;top:1240px;line-height:36px;font-size:24.5px;letter-spacing:-0.4px">Aktuelles Objekt</div>
<div class="var" style="left:1288.5px;top:1280px">$Query</div>
<div class="var" style="left:1571px;top:1280px">&quot;SELECT * FROM Lenses&quot;</div>
<div class="var" style="left:1288.5px;top:1325px">AddAnother</div>
<div class="var" style="left:1571px;top:1325px">FALSE</div>
<div class="var" style="left:1288.5px;top:1370px">But_Add</div>
<div class="var" style="left:1571px;top:1370px">(Button 0x55a07de080e8)</div>
<div class="var" style="left:1288.5px;top:1415px">But_AddAnother</div>
<div class="var" style="left:1571px;top:1415px">(Button 0x55a07de2cc28)</div>
<div class="var" style="left:1288.5px;top:1460px">But_Cancel</div>
<div class="var" style="left:1571px;top:1460px">(Button 0x55a07de2b828)</div>
<div class="var" style="left:1288.5px;top:1505px">But_Change</div>
<div class="var" style="left:1571px;top:1505px">(Button 0x55a07de0a018)</div>
<div class="var" style="left:1288.5px;top:1550px">But_Clone</div>
<div class="var" style="left:1571px;top:1550px">(Button 0x55a07de0fe28)</div>
<div class="var" style="left:1288.5px;top:1595px">But_Delete</div>
<div class="var" style="left:1571px;top:1595px">(Button 0x55a07de0c718)</div>
<div class="var" style="left:1288.5px;top:1640px">But_Help</div>
<div class="var" style="left:1571px;top:1640px">(Button 0x55a07de27bd8)</div>
<div class="var" style="left:1288.5px;top:1685px">But_OK</div>
<div class="var" style="left:1571px;top:1685px">(Button 0x55a07de30938)</div>
<div class="var" style="left:1288.5px;top:1730px">But_Search</div>
<div class="var" style="left:1571px;top:1730px">(Button 0x55a07de22388)</div>
<div class="var" style="left:1288.5px;top:1775px">But_View</div>
<div class="var" style="left:1571px;top:1775px">(Button 0x55a07de25348)</div>
<div class="var" style="left:1288.5px;top:1820px">CloneRecord</div>
<div class="var" style="left:1571px;top:1820px">FALSE</div>
<div class="var" style="left:1288.5px;top:1865px">Cmb_Filter</div>
<div class="var" style="left:1571px;top:1865px">(ComboBox 0x55a07ddb84e8)</div>
</div></body></html>
